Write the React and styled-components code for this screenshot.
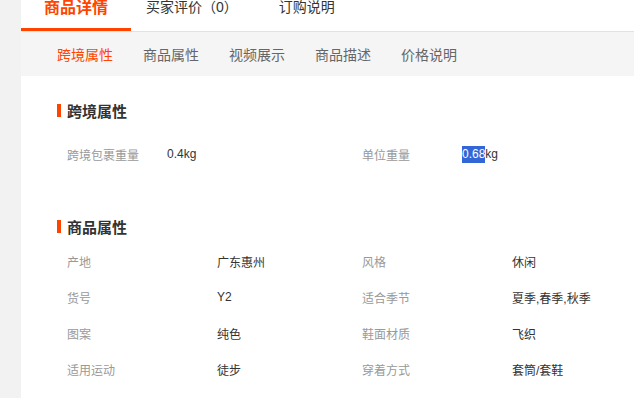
import React from "react";
import styled, { createGlobalStyle } from "styled-components";

const Global = createGlobalStyle`
  html, body { margin: 0; padding: 0; background: #fff; overflow: hidden; }
  body { font-family: "Liberation Sans", "Noto Sans CJK SC", Arial, sans-serif; }
  * { box-sizing: border-box; }
`;

const ORANGE = "#ff4400";

const Page = styled.div`
  display: flex;
  width: 634px;
  height: 398px;
  overflow: hidden;
`;

const Strip = styled.div`
  width: 21px;
  flex: none;
  background: #f2f2f2;
`;

const Main = styled.div`
  flex: 1;
  display: flex;
  flex-direction: column;
`;

const TabBar = styled.div`
  display: flex;
  height: 32px;
  border-bottom: 1px solid #e2e2e2;
`;

const Tab = styled.div`
  height: 31px;
  line-height: 15px;
  font-size: ${(p) => (p.$active ? "16px" : "14px")};
  font-weight: ${(p) => (p.$active ? 700 : 400)};
  color: ${(p) => (p.$active ? ORANGE : "#333")};
  width: ${(p) => p.$w || "auto"};
  margin-left: ${(p) => p.$ml || "0"};
  text-align: center;
  border-bottom: 3px solid ${(p) => (p.$active ? ORANGE : "transparent")};
  white-space: nowrap;
`;

const SubBar = styled.div`
  display: flex;
  align-items: center;
  gap: 30px;
  height: 44px;
  padding-left: 36px;
  background: #f5f5f5;
`;

const SubTab = styled.div`
  font-size: 14px;
  color: ${(p) => (p.$active ? ORANGE : "#666")};
  white-space: nowrap;
`;

const Section = styled.div`
  padding-left: 36px;
  margin-top: ${(p) => p.$mt};
`;

const Title = styled.div`
  display: flex;
  align-items: center;
  height: 20px;
  font-size: 15px;
  font-weight: 700;
  color: #333;
  &::before {
    content: "";
    width: 4px;
    height: 13px;
    background: ${ORANGE};
    margin-right: 6px;
  }
`;

const Grid = styled.div`
  display: grid;
  grid-template-columns: 295px 1fr;
  padding-left: 10px;
  margin-top: ${(p) => p.$mt};
`;

const Cell = styled.div`
  display: flex;
  align-items: center;
  height: ${(p) => p.$h};
  font-size: 12px;
`;

const Label = styled.span`
  width: ${(p) => p.$w};
  flex: none;
  color: #999;
`;

const Value = styled.span`
  color: #333;
`;

const Sel = styled.span`
  display: inline-block;
  line-height: 17px;
  background: #3367d6;
  color: #fff;
`;

const cross = [
  ["跨境包裹重量", "0.4kg"],
  ["单位重量", null],
];

const attrs = [
  ["产地", "广东惠州"],
  ["风格", "休闲"],
  ["货号", "Y2"],
  ["适合季节", "夏季,春季,秋季"],
  ["图案", "纯色"],
  ["鞋面材质", "飞织"],
  ["适用运动", "徒步"],
  ["穿着方式", "套筒/套鞋"],
];

export default function App() {
  return (
    <>
      <Global />
      <Page>
        <Strip />
        <Main>
          <TabBar>
            <Tab $active $w="110px">商品详情</Tab>
            <Tab $ml="15px">买家评价（0）</Tab>
            <Tab $ml="41px">订购说明</Tab>
          </TabBar>
          <SubBar>
            <SubTab $active>跨境属性</SubTab>
            <SubTab>商品属性</SubTab>
            <SubTab>视频展示</SubTab>
            <SubTab>商品描述</SubTab>
            <SubTab>价格说明</SubTab>
          </SubBar>
          <Section $mt="24px">
            <Title>跨境属性</Title>
            <Grid $mt="24px">
              {cross.map(([l, v]) => (
                <Cell key={l} $h="20px">
                  <Label $w="100px">{l}</Label>
                  <Value>
                    {v ?? (
                      <>
                        <Sel>0.68</Sel>kg
                      </>
                    )}
                  </Value>
                </Cell>
              ))}
            </Grid>
          </Section>
          <Section $mt="52px">
            <Title>商品属性</Title>
            <Grid $mt="7px">
              {attrs.map(([l, v]) => (
                <Cell key={l} $h="36px">
                  <Label $w="150px">{l}</Label>
                  <Value>{v}</Value>
                </Cell>
              ))}
            </Grid>
          </Section>
        </Main>
      </Page>
    </>
  );
}
